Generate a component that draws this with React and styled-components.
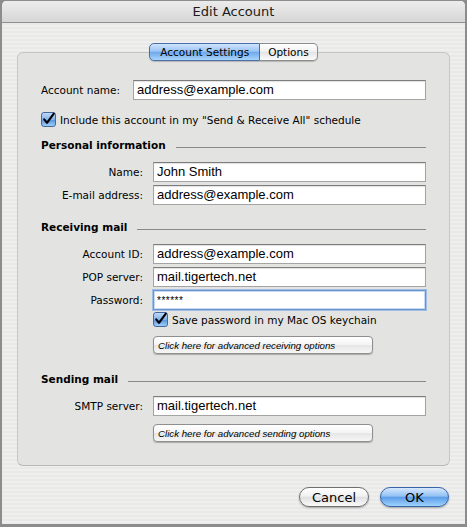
import React, { useState } from 'react'
import styled, { createGlobalStyle } from 'styled-components'

const GlobalStyle = createGlobalStyle`
  html, body {
    margin: 0;
    padding: 0;
    background: #8c8c8c;
  }
`

const UI_FONT = `'DejaVu Sans', 'Liberation Sans', sans-serif`
const FIELD_FONT = `'Liberation Sans', Arial, sans-serif`

const Window = styled.div`
  width: 467px;
  height: 527px;
  box-sizing: border-box;
  border: 2px solid #8c8c8c;
  border-top: 1px solid #8c8c8c;
  border-bottom-width: 3px;
  border-radius: 6px 6px 0 0;
  display: flex;
  flex-direction: column;
  overflow: hidden;
  font-family: ${UI_FONT};
  font-size: 10.5px;
  color: #000;
  background: repeating-linear-gradient(
    to bottom,
    #efefef 0px,
    #efefef 2px,
    #e9eae8 2px,
    #e9eae8 4px
  );
`

const TitleBar = styled.div`
  height: 21px;
  flex: none;
  display: flex;
  align-items: center;
  justify-content: center;
  background: linear-gradient(to bottom, #ececec, #d6d6d6);
  border-bottom: 1px solid #8f8f8f;
  font-size: 13px;
  color: #1a1a1a;
`

const Body = styled.div`
  flex: 1;
  display: flex;
  flex-direction: column;
  padding: 20px 15px 0 15px;
`

const TabRow = styled.div`
  display: flex;
  justify-content: center;
  position: relative;
  z-index: 1;
  margin-bottom: -9px;
`

const Tab = styled.button`
  font-family: ${UI_FONT};
  font-size: 10.5px;
  height: 18px;
  padding: 0 ${p => p.$pad}px;
  margin: 0;
  border: 1px solid ${p => (p.$active ? '#4a6fa5' : '#8d8d8d')};
  border-radius: ${p => (p.$first ? '5px 0 0 5px' : '0 5px 5px 0')};
  ${p => (p.$first ? '' : 'border-left: none;')}
  color: #000;
  cursor: pointer;
  background: ${p =>
    p.$active
      ? 'linear-gradient(to bottom, #cfe3fb 0%, #9cc5f4 45%, #6fa8ec 52%, #a9d4fb 100%)'
      : 'linear-gradient(to bottom, #ffffff 0%, #f2f2f2 45%, #e4e4e4 52%, #fbfbfb 100%)'};
  box-shadow: 0 1px 1px rgba(0, 0, 0, 0.2);
`

const GroupBox = styled.div`
  height: 414px;
  box-sizing: border-box;
  background: #e3e4e2;
  border: 1px solid #c6c6c6;
  border-bottom-color: #b8b8b8;
  border-radius: 6px;
  padding: 27px 23px 0 23px;
  display: flex;
  flex-direction: column;
`

const Row = styled.div`
  display: flex;
  align-items: center;
  margin-top: ${p => p.$top || 0}px;
`

const Label = styled.label`
  width: ${p => p.$width}px;
  flex: none;
  text-align: ${p => (p.$left ? 'left' : 'right')};
  padding-right: ${p => (p.$left ? 0 : 10)}px;
  box-sizing: border-box;
  white-space: nowrap;
`

const Field = styled.input`
  flex: 1;
  min-width: 0;
  height: 20px;
  box-sizing: border-box;
  margin: 0;
  padding: 0 3px 1px 3px;
  font-family: ${FIELD_FONT};
  font-size: 13px;
  color: #000;
  background: #fff;
  border: 1px solid #a4a4a4;
  border-top-color: #7c7c7c;
  box-shadow: inset 0 1px 1px rgba(0, 0, 0, 0.12);
  outline: none;

  &[data-focus='true'] {
    border: 1px solid #6d95c9;
    box-shadow: 0 0 0 1px #9dbde6, inset 0 0 0 1px #c6daf3;
  }
`

const SecretField = styled(Field)`
  font-size: 10px;
  letter-spacing: 0.5px;
  padding-top: 2px;
`

const Check = styled.label`
  display: flex;
  align-items: center;
  gap: 4px;
  white-space: nowrap;
  cursor: pointer;
`

const Heading = styled.div`
  display: flex;
  align-items: center;
  gap: 10px;
  font-weight: bold;
  margin-top: ${p => p.$top}px;

  &::after {
    content: '';
    flex: 1;
    height: 0;
    border-top: 1px solid #8a8a8a;
    margin-top: 5px;
  }
`

const Indent = styled.div`
  display: flex;
  flex-direction: column;
  padding-left: 112px;
  margin-top: ${p => p.$top || 0}px;
`

const OptionsButton = styled.button`
  width: 220px;
  height: 18px;
  box-sizing: border-box;
  margin: 0;
  padding: 0 4px;
  text-align: left;
  font-family: ${FIELD_FONT};
  font-style: italic;
  font-size: 9.7px;
  color: #000;
  border: 1px solid #8f8f8f;
  border-radius: 4px;
  background: linear-gradient(to bottom, #ffffff 0%, #f4f4f4 50%, #e6e6e6 51%, #f6f6f6 100%);
  box-shadow: 0 1px 1px rgba(0, 0, 0, 0.25);
  cursor: pointer;
`

const Footer = styled.div`
  display: flex;
  justify-content: flex-end;
  gap: 11px;
  padding: 21px 1px 0 0;
`

const PushButton = styled.button`
  width: ${p => p.$width}px;
  height: 20px;
  margin: 0;
  padding: 0;
  font-family: ${UI_FONT};
  font-size: 13px;
  color: #000;
  border-radius: 10px;
  cursor: pointer;
  border: 1px solid ${p => (p.$default ? '#3a64a8' : '#6f6f6f')};
  background: ${p =>
    p.$default
      ? 'linear-gradient(to bottom, #d6e9fd 0%, #93c1f4 45%, #5d9eea 52%, #9fd2fc 100%)'
      : 'linear-gradient(to bottom, #ffffff 0%, #f1f1f1 45%, #e0e0e0 52%, #fafafa 100%)'};
  box-shadow: 0 1px 2px rgba(0, 0, 0, 0.3);
`

const CheckIcon = () => (
  <svg width="15" height="15" viewBox="0 0 15 15">
    <defs>
      <linearGradient id="cb" x1="0" y1="0" x2="0" y2="1">
        <stop offset="0" stopColor="#c4dcf8" />
        <stop offset="0.5" stopColor="#80b2ec" />
        <stop offset="0.55" stopColor="#5b97e0" />
        <stop offset="1" stopColor="#a6d2fb" />
      </linearGradient>
    </defs>
    <rect x="0.5" y="0.5" width="14" height="14" rx="2.5" fill="url(#cb)" stroke="#43689d" />
    <path d="M3.2 7.4 L6 10.8 L12.8 1.6" fill="none" stroke="#000" strokeWidth="2.1" strokeLinecap="round" strokeLinejoin="round" />
  </svg>
)

const LABEL_W = 112

export default function App() {
  const [tab, setTab] = useState('account')

  return (
    <>
      <GlobalStyle />
      <Window>
        <TitleBar>Edit Account</TitleBar>
        <Body>
          <TabRow>
            <Tab $first $pad={10} $active={tab === 'account'} onClick={() => setTab('account')}>
              Account Settings
            </Tab>
            <Tab $pad={8} $active={tab === 'options'} onClick={() => setTab('options')}>
              Options
            </Tab>
          </TabRow>
          <GroupBox>
            <Row>
              <Label $left $width={92}>Account name:</Label>
              <Field defaultValue="address@example.com" />
            </Row>
            <Row $top={12}>
              <Check>
                <CheckIcon />
                Include this account in my "Send &amp; Receive All" schedule
              </Check>
            </Row>

            <Heading $top={12}>Personal information</Heading>
            <Row $top={11}>
              <Label $width={LABEL_W}>Name:</Label>
              <Field defaultValue="John Smith" />
            </Row>
            <Row $top={3}>
              <Label $width={LABEL_W}>E-mail address:</Label>
              <Field defaultValue="address@example.com" />
            </Row>

            <Heading $top={16}>Receiving mail</Heading>
            <Row $top={11}>
              <Label $width={LABEL_W}>Account ID:</Label>
              <Field defaultValue="address@example.com" />
            </Row>
            <Row $top={3}>
              <Label $width={LABEL_W}>POP server:</Label>
              <Field defaultValue="mail.tigertech.net" />
            </Row>
            <Row $top={3}>
              <Label $width={LABEL_W}>Password:</Label>
              <SecretField defaultValue="******" data-focus="true" />
            </Row>
            <Indent $top={2}>
              <Check>
                <CheckIcon />
                Save password in my Mac OS keychain
              </Check>
              <Row $top={9}>
                <OptionsButton>Click here for advanced receiving options</OptionsButton>
              </Row>
            </Indent>

            <Heading $top={19}>Sending mail</Heading>
            <Row $top={11}>
              <Label $width={LABEL_W}>SMTP server:</Label>
              <Field defaultValue="mail.tigertech.net" />
            </Row>
            <Indent $top={8}>
              <Row>
                <OptionsButton>Click here for advanced sending options</OptionsButton>
              </Row>
            </Indent>
          </GroupBox>
          <Footer>
            <PushButton $width={70}>Cancel</PushButton>
            <PushButton $width={69} $default>OK</PushButton>
          </Footer>
        </Body>
      </Window>
    </>
  )
}
